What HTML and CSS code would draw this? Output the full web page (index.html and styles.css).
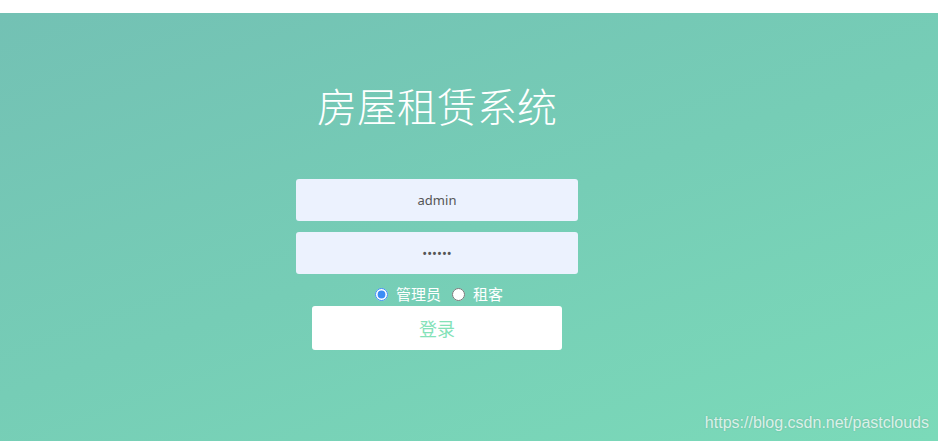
FILE: index.html
```html
<!DOCTYPE html>
<html lang="zh-CN">
<head>
<meta charset="utf-8">
<title>房屋租赁系统</title>
<link rel="stylesheet" href="styles.css">
</head>
<body>
<div class="page">
  <h1 class="title">房屋租赁系统</h1>
  <form class="login">
    <input class="field" type="text" value="admin">
    <input class="field" type="password" value="123456">
    <div class="roles">
      <label class="role"><input type="radio" name="role" checked><span>管理员</span></label>
      <label class="role"><input type="radio" name="role"><span>租客</span></label>
    </div>
    <button class="submit" type="button">登录</button>
  </form>
  <div class="watermark">https://blog.csdn.net/pastclouds</div>
</div>
</body>
</html>
```
FILE: styles.css
```css
html, body {
  margin: 0;
  padding: 0;
  background: #ffffff;
}
body {
  width: 939px;
  height: 441px;
  overflow: hidden;
  font-family: "Noto Sans CJK SC", "Noto Sans", sans-serif;
}
.page {
  position: relative;
  margin-top: 13px;
  width: 938px;
  height: 428px;
  background: linear-gradient(160deg, #73c1b4 0%, #76cdb6 50%, #7bdab9 100%);
  display: flex;
  flex-direction: column;
  align-items: center;
  box-sizing: border-box;
  padding: 72px 64px 0 0;
}
.title {
  margin: 0 0 54px 0;
  font-size: 40px;
  line-height: 40px;
  font-weight: 300;
  color: #ffffff;
  letter-spacing: 0;
}
.login {
  display: flex;
  flex-direction: column;
  align-items: center;
  margin: 0;
}
.field {
  width: 282px;
  height: 42px;
  box-sizing: border-box;
  border: none;
  border-radius: 3px;
  background: #ecf2fe;
  text-align: center;
  font-family: "Noto Sans", "Noto Sans CJK SC", sans-serif;
  font-size: 13px;
  color: #555555;
  outline: none;
  margin: 0 0 11px 0;
  padding: 0;
}
.roles {
  display: flex;
  align-items: center;
  height: 20px;
  margin: -1px 0 0 4px;
  gap: 11px;
}
.role {
  display: flex;
  align-items: center;
  gap: 8px;
  color: #ffffff;
  font-size: 15px;
  line-height: 20px;
}
.role input {
  margin: 0;
  width: 13px;
  height: 13px;
  accent-color: #3b8cf5;
}
.submit {
  margin-top: 2px;
  width: 250px;
  height: 44px;
  border: none;
  border-radius: 3px;
  background: #ffffff;
  color: #84e2b8;
  font-family: "Noto Sans CJK SC", sans-serif;
  font-size: 18px;
  padding: 0;
}
.watermark {
  position: absolute;
  right: 9px;
  bottom: 9px;
  font-family: "Liberation Sans", Arial, sans-serif;
  font-size: 16px;
  line-height: 18px;
  color: rgba(255, 255, 255, 0.75);
  text-shadow: 0 0 2px rgba(0, 0, 0, 0.15);
}
```
